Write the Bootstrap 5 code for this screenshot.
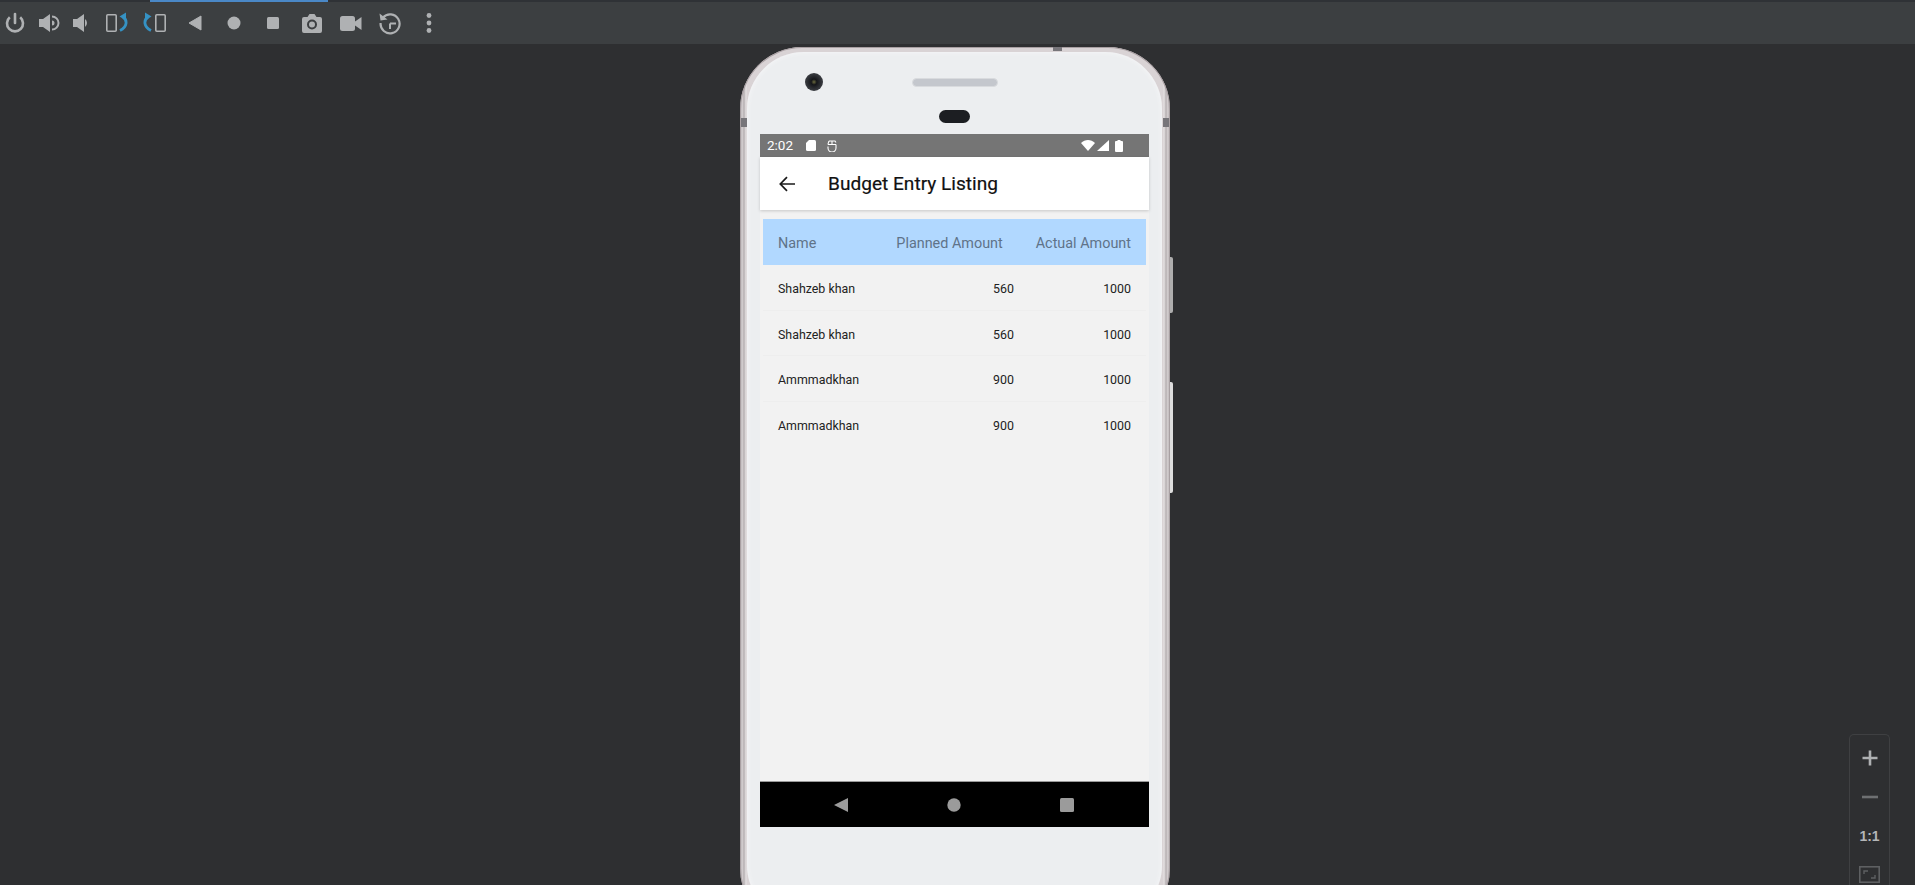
<!DOCTYPE html>
<html lang="en">
<head>
<meta charset="utf-8">
<title>Budget Entry Listing</title>
<link href="https://cdn.jsdelivr.net/npm/bootstrap@5.3.0/dist/css/bootstrap.min.css" rel="stylesheet">
<style>
html,body{height:100%;overflow:hidden}
body{background:#2e2f31;font-family:Roboto,"Liberation Sans",sans-serif}
.ide-bar{height:44px;flex:none;background:#3c3f41;padding-left:3px;gap:15px;position:relative;border-top:2px solid #2f3236}
.ide-progress{position:absolute;left:150px;top:-2px;width:178px;height:2px;background:#4a88c7}
.ide-bar svg{width:24px;height:24px;flex:none;display:block}
.tight-a{margin-right:-5.5px}.tight-b{margin-right:-6.5px}.tight-c{margin-right:-4px}.tight-e{margin-right:1px}
.stage{padding:3px 5px 0 0;min-height:0}
.phone{width:430px;height:883px;position:relative;flex:none;border-radius:62px;padding:5px 8px 8px 7px;
 box-shadow:inset 0 0 0 1px #a89fa2;
 background:linear-gradient(90deg,#8f8a8c 0,#d9d3d5 2px,#b5afb1 4px,#e6e2e3 6px,#d9d3d5 7px,#d9d3d5 423px,#e6e2e3 424px,#b5afb1 426px,#d9d3d5 428px,#8f8a8c 430px)}
.bezel{height:100%;background:#eceef0;border-radius:57px;padding:82px 13px 0;position:relative;box-shadow:inset 0 0 5px #f8f8f9}
.cam{position:absolute;left:58px;top:21px;width:18px;height:18px;border-radius:50%;background:radial-gradient(circle,#6b6a3e 0,#15161a 22%,#33353a 60%,#55575c 100%)}
.speaker{position:absolute;left:165px;top:26px;width:86px;height:9px;border-radius:5px;background:#c4c7cd;border:1px solid #d9dbde}
.pill{position:absolute;left:192px;top:58px;width:31px;height:13px;border-radius:7px;background:#1c1e22}
.side-key{position:absolute;left:430px;width:3px;background:#d0d0d0;border-radius:0 2px 2px 0}
.key-one{top:210px;height:56px;background:#aeaeae}
.key-two{top:335px;height:111px;background:#dedede}
.band-mark{position:absolute;background:#77757a}
.mark-left{left:1px;top:71px;width:6px;height:9px}
.mark-right{right:1px;top:71px;width:6px;height:9px}
.mark-top{left:313px;top:0;width:9px;height:4px}
.screen{height:693px;background:#f2f2f2}
.status-strip{height:23px;flex:none;background:#757575;color:#fff;font-size:13.5px;font-weight:400;padding:0 0 0 7px}
.status-strip svg{display:block;flex:none}
.sd-ico{margin-left:13px;margin-right:11px}
.right-ico{margin-left:auto;margin-right:26px;gap:2px}
.app-head{height:53px;flex:none;background:#fff;box-shadow:0 1px 3px rgba(0,0,0,.18);position:relative;padding-left:19px}
.app-title{font-size:19.1px;font-weight:400;color:#111;margin-left:33px;padding-top:1px;-webkit-text-stroke:.2px #111}
.list-area{padding:9px 3px 0;min-height:0}
.col-label{flex:1 1 auto}
.head-row{height:46px;background:#b1d8ff;color:#5f7389;font-size:14.4px;padding:4px 15px 0}
.head-row .planned{margin-right:33px}
.data-row{height:45.6px;font-size:12.4px;color:#222;padding:4px 15px 0;border-bottom:1px solid #eeeeee}
.data-row:last-child{border-bottom:0}
.data-row .planned{width:60px;text-align:right;margin-right:82px}
.data-row .actual{width:35px;text-align:right}
.bottom-nav{height:46px;flex:none;background:#000;border-top:1px solid #9a9a9a;padding-right:2px}
.bottom-nav svg{display:block}
.nav-gap{gap:80px}
.zoom-panel{position:absolute;left:1849px;top:734px;width:41px;height:151px;border:1px solid #3f4042;border-bottom:0;border-radius:5px 5px 0 0;background:#2e2f31;color:#afb1b3;padding-top:3px}
.zoom-panel>*{height:39px;flex:none}
.zoom-panel svg{display:block}
.one-one{font:bold 14px "Liberation Sans",sans-serif;color:#b4b6b8}
</style>
</head>
<body class="d-flex flex-column">
<header class="ide-bar d-flex align-items-center">
  <div class="ide-progress"></div>
  <svg class="tight-a" viewBox="0 0 24 24" fill="none" stroke="#afb1b3" stroke-width="2.6"><path d="M12 3v9" stroke-linecap="round"/><path d="M6.8 6.3a8 8 0 1 0 10.4 0"/></svg>
  <svg class="tight-b" viewBox="0 0 24 24"><path d="M2 8h4l7-5v18l-7-5H2z" fill="#afb1b3"/><path d="M15 5.500a6.500 6.500 0 0 1 0 13" fill="none" stroke="#afb1b3" stroke-width="2"/><path d="M15 9.500a2.500 2.500 0 0 1 0 5z" fill="#afb1b3"/></svg>
  <svg class="tight-c" viewBox="0 0 24 24"><path d="M4 8h4l7-5v18l-7-5H4z" fill="#afb1b3"/><path d="M16 8a5 5 0 0 1 0 8z" fill="#afb1b3"/></svg>
  <svg viewBox="0 0 24 24" fill="none"><rect x="2.800" y="3.800" width="9.400" height="16.400" rx="1" stroke="#afb1b3" stroke-width="1.600"/><path d="M19 6c4.500 3 4.500 10-3 13.500" stroke="#3592c4" stroke-width="2.800"/><path d="M15.500 5.500L22 1.500v8z" fill="#3592c4"/></svg>
  <svg class="tight-e" viewBox="0 0 24 24" fill="none"><rect x="12.800" y="3.800" width="9.400" height="16.400" rx="1" stroke="#afb1b3" stroke-width="1.600"/><path d="M5 6c-4.500 3-4.500 10 3 13.500" stroke="#3592c4" stroke-width="2.800"/><path d="M8.500 5.500L2 1.500v8z" fill="#3592c4"/></svg>
  <svg viewBox="0 0 24 24"><path d="M6 12l12-7v14z" fill="#afb1b3" stroke="#afb1b3" stroke-linejoin="round"/></svg>
  <svg viewBox="0 0 24 24"><circle cx="12" cy="12" r="6.500" fill="#afb1b3"/></svg>
  <svg viewBox="0 0 24 24"><rect x="6" y="6" width="12" height="12" rx="1.500" fill="#afb1b3"/></svg>
  <svg viewBox="0 0 24 24"><path d="M2 8a2 2 0 0 1 2-2h3.500l2-3h5l2 3H20a2 2 0 0 1 2 2v12a2 2 0 0 1-2 2H4a2 2 0 0 1-2-2z" fill="#afb1b3"/><circle cx="12" cy="13.500" r="4" fill="none" stroke="#3c3f41" stroke-width="2"/></svg>
  <svg viewBox="0 0 24 24"><rect x="1" y="5" width="15" height="15" rx="2.500" fill="#afb1b3"/><path d="M16 10.500l6.500-4.500v13l-6.500-4.500z" fill="#afb1b3"/></svg>
  <svg viewBox="0 0 24 24" fill="none" stroke="#afb1b3" stroke-width="2.200"><path d="M5 6.500A9.500 9.500 0 1 1 2.600 12"/><path d="M1.500 2.500l1 7 7-1" fill="#afb1b3" stroke="none"/><path d="M12 12.500V18M12 12.500h6" stroke-width="2"/></svg>
  <svg viewBox="0 0 24 24"><circle cx="12" cy="4.500" r="2.400" fill="#afb1b3"/><circle cx="12" cy="12" r="2.400" fill="#afb1b3"/><circle cx="12" cy="19.500" r="2.400" fill="#afb1b3"/></svg>
</header>

<main class="stage d-flex justify-content-center flex-grow-1 overflow-hidden">
  <div class="phone">
    <span class="side-key key-one"></span>
    <span class="side-key key-two"></span>
    <span class="band-mark mark-left"></span>
    <span class="band-mark mark-right"></span>
    <span class="band-mark mark-top"></span>
    <div class="bezel">
      <span class="cam"></span>
      <span class="speaker"></span>
      <span class="pill"></span>
      <div class="screen d-flex flex-column">
        <div class="status-strip d-flex align-items-center">
          <span>2:02</span>
          <svg class="sd-ico" width="10" height="11" viewBox="0 0 10 11"><path d="M3 0h5.500a1.500 1.500 0 0 1 1.500 1.500V9.500A1.500 1.500 0 0 1 8.500 11h-7A1.500 1.500 0 0 1 0 9.500V3z" fill="#fff"/></svg>
          <svg width="10" height="12" viewBox="0 0 10 12" fill="none" stroke="#fff" stroke-width="1.100"><path d="M2 1h6l1 1.500M1 4.500h8M1 4.500c0-1 .500-2 1-3.500M9 4.500V8a3.500 3.500 0 0 1-8 0V6.500"/><path d="M5 1v3"/></svg>
          <div class="right-ico d-flex align-items-center">
            <svg width="14" height="11" viewBox="0 0 14 11"><path d="M0 3c4-4 10-4 14 0l-7 8z" fill="#fff"/></svg>
            <svg width="12" height="11" viewBox="0 0 12 11"><path d="M12 0v11H0z" fill="#fff"/></svg>
            <svg class="ms-1" width="8" height="12" viewBox="0 0 8 12"><path d="M2.500 0h3v1H7a1 1 0 0 1 1 1v9a1 1 0 0 1-1 1H1a1 1 0 0 1-1-1V2a1 1 0 0 1 1-1h1.500z" fill="#fff"/></svg>
          </div>
        </div>
        <div class="app-head d-flex align-items-center">
          <svg width="16" height="16" viewBox="0 0 16 16" fill="none" stroke="#1a1a1a" stroke-width="1.700"><path d="M16 8H1.500M8 1.200L1.300 8 8 14.800"/></svg>
          <span class="app-title">Budget Entry Listing</span>
        </div>
        <div class="list-area flex-grow-1">
          <div class="head-row d-flex align-items-center">
            <span class="col-label">Name</span>
            <span class="planned">Planned Amount</span>
            <span>Actual Amount</span>
          </div>
          <div class="data-row d-flex align-items-center"><span class="col-label">Shahzeb khan</span><span class="planned">560</span><span class="actual">1000</span></div>
          <div class="data-row d-flex align-items-center"><span class="col-label">Shahzeb khan</span><span class="planned">560</span><span class="actual">1000</span></div>
          <div class="data-row d-flex align-items-center"><span class="col-label">Ammmadkhan</span><span class="planned">900</span><span class="actual">1000</span></div>
          <div class="data-row d-flex align-items-center"><span class="col-label">Ammmadkhan</span><span class="planned">900</span><span class="actual">1000</span></div>
        </div>
        <div class="bottom-nav d-flex align-items-center justify-content-center nav-gap">
          <svg width="52" height="16" viewBox="0 0 52 16"><path d="M0 8L14 1v14z" fill="#9b9b9b" transform="translate(19 0)"/></svg>
          <svg width="14" height="14" viewBox="0 0 14 14"><circle cx="7" cy="7" r="6.700" fill="#9b9b9b"/></svg>
          <svg width="52" height="16" viewBox="0 0 52 16"><rect x="19" y="1" width="14" height="14" rx="1.500" fill="#9b9b9b"/></svg>
        </div>
      </div>
    </div>
  </div>
</main>

<aside class="zoom-panel d-flex flex-column align-items-center">
  <div class="d-flex align-items-center justify-content-center"><svg width="16" height="16" viewBox="0 0 16 16"><path d="M8 .5v15M.5 8h15" stroke="#afb1b3" stroke-width="2.600"/></svg></div>
  <div class="d-flex align-items-center justify-content-center"><svg width="16" height="4" viewBox="0 0 16 4"><path d="M0 2h16" stroke="#6e7072" stroke-width="2.600"/></svg></div>
  <div class="d-flex align-items-center justify-content-center one-one">1:1</div>
  <div class="d-flex align-items-center justify-content-center"><svg width="21" height="17" viewBox="0 0 21 17" fill="none" stroke="#5e6062"><rect x=".8" y=".8" width="19.400" height="15.400" stroke-width="1.600"/><path d="M5 8V5h4M16 9v3h-4" stroke-width="1.400"/></svg></div>
</aside>
<script src="https://cdn.jsdelivr.net/npm/bootstrap@5.3.0/dist/js/bootstrap.bundle.min.js"></script>
</body>
</html>
